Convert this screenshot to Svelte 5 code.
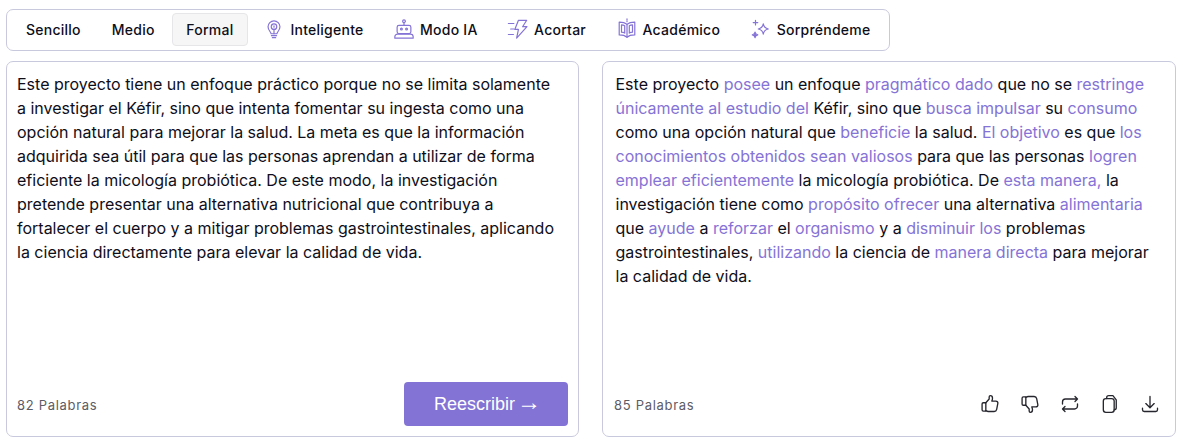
<script>
	const modes = [
		{ label: 'Sencillo' },
		{ label: 'Medio' },
		{ label: 'Formal', active: true },
		{ label: 'Inteligente', icon: 'bulb' },
		{ label: 'Modo IA', icon: 'robot' },
		{ label: 'Acortar', icon: 'bolt' },
		{ label: 'Académico', icon: 'book' },
		{ label: 'Sorpréndeme', icon: 'spark' }
	];

	const original =
		'Este proyecto tiene un enfoque práctico porque no se limita solamente a investigar el Kéfir, sino que intenta fomentar su ingesta como una opción natural para mejorar la salud. La meta es que la información adquirida sea útil para que las personas aprendan a utilizar de forma eficiente la micología probiótica. De este modo, la investigación pretende presentar una alternativa nutricional que contribuya a fortalecer el cuerpo y a mitigar problemas gastrointestinales, aplicando la ciencia directamente para elevar la calidad de vida.';

	// [text, changed]
	const rewritten = [
		['Este proyecto ', false],
		['posee', true],
		[' un enfoque ', false],
		['pragmático dado', true],
		[' que no se ', false],
		['restringe únicamente al estudio del', true],
		[' Kéfir, sino que ', false],
		['busca impulsar', true],
		[' su ', false],
		['consumo', true],
		[' como una opción natural que ', false],
		['beneficie', true],
		[' la salud. ', false],
		['El objetivo', true],
		[' es que ', false],
		['los conocimientos obtenidos sean valiosos', true],
		[' para que las personas ', false],
		['logren emplear eficientemente', true],
		[' la micología probiótica. De ', false],
		['esta manera,', true],
		[' la investigación tiene como ', false],
		['propósito ofrecer', true],
		[' una alternativa ', false],
		['alimentaria', true],
		[' que ', false],
		['ayude', true],
		[' a ', false],
		['reforzar', true],
		[' el ', false],
		['organismo', true],
		[' y a ', false],
		['disminuir los', true],
		[' problemas gastrointestinales, ', false],
		['utilizando', true],
		[' la ciencia de ', false],
		['manera directa', true],
		[' para mejorar la calidad de vida.', false]
	];
</script>

<div class="page">
	<div class="toolbar">
		{#each modes as mode}
			<button class="mode" class:active={mode.active}>
				{#if mode.icon === 'bulb'}
					<svg width="22" height="22" viewBox="0 0 24 24" class="ic">
						<path d="M8.800 17.200c0-2-3.300-3.600-3.300-7.600a6.500 6.500 0 0 1 13 0c0 4-3.300 5.600-3.300 7.600z" />
						<circle cx="12" cy="9.500" r="3" />
						<path d="M12 8.500v1.500M12 12.500v4.700M9.200 19.300h5.600M10.200 21.500h3.600" />
					</svg>
				{:else if mode.icon === 'robot'}
					<svg width="22" height="22" viewBox="0 0 24 24" class="ic">
						<circle cx="12" cy="3.500" r="1.500" />
						<path d="M12 5v3" />
						<rect x="4.500" y="8" width="15" height="9" rx="2" />
						<circle cx="9.200" cy="12" r="1" />
						<circle cx="14.800" cy="12" r="1" />
						<path d="M2 22v-1.500a3 3 0 0 1 3-3h14a3 3 0 0 1 3 3V22M2 22h20" />
					</svg>
				{:else if mode.icon === 'bolt'}
					<svg width="22" height="22" viewBox="0 0 24 24" class="ic">
						<path d="M12.500 2.500h9l-4.500 7h4.800L10.500 22l2-9.500H8.500z" />
						<path d="M1.500 6h6M4 12h3.500M1.500 18h5.500" />
					</svg>
				{:else if mode.icon === 'book'}
					<svg width="22" height="22" viewBox="0 0 24 24" class="ic">
						<path d="M12 7c-2-1.800-5-2.500-8.500-2.500v14c3.500 0 6.500.7 8.500 2.500 2-1.800 5-2.500 8.500-2.500v-14C17 4.500 14 5.200 12 7z" />
						<path d="M12 7v14M6 7.500c1.500 0 2.500.3 3.500 1v8c-1-.7-2-1-3.500-1zM18 7.500c-1.500 0-2.500.3-3.500 1v8c1-.7 2-1 3.500-1z" />
						<path d="M12 1v1.200M12 3.400v.6" />
					</svg>
				{:else if mode.icon === 'spark'}
					<svg width="22" height="22" viewBox="0 0 24 24" class="ic">
						<path d="M14.500 6.500c.6 3.300 2.200 4.900 5.500 5.500-3.300.6-4.900 2.200-5.500 5.500-.6-3.300-2.200-4.900-5.500-5.500 3.300-.6 4.900-2.200 5.500-5.500z" />
						<path d="M6 2.500v5M3.500 5h5" />
						<path d="M5.500 15.500c.3 1.900 1.100 2.700 3 3-1.900.3-2.700 1.100-3 3-.3-1.900-1.100-2.700-3-3 1.900-.3 2.700-1.100 3-3z" class="fill" />
					</svg>
				{/if}
				<span>{mode.label}</span>
			</button>
		{/each}
	</div>

	<div class="panels">
		<div class="panel">
			<p class="text source">{original}</p>
			<div class="foot">
				<span class="count">82 Palabras</span>
				<button class="submit">Reescribir <span class="arrow">→</span></button>
			</div>
		</div>

		<div class="panel result">
			<p class="text">
				{#each rewritten as [part, changed]}{#if changed}<span class="changed">{part}</span>{:else}{part}{/if}{/each}
			</p>
			<div class="foot">
				<span class="count">85 Palabras</span>
				<div class="actions">
					<svg width="20" height="20" viewBox="0 0 24 24" class="act">
						<path d="M7 10.500H4A1.500 1.500 0 0 0 2.500 12v7A1.500 1.500 0 0 0 4 20.500h3z" />
						<path d="M7 10.500l4-4.500V3.500c0-1 .7-1.500 1.500-1.500 1.800 0 2.500 1.500 2.500 3 0 1.500-.8 3.500-.8 3.500H19c1.600 0 2.700 1.300 2.400 2.800L20 18.500c-.3 1.500-1.400 2.500-3 2.500h-7c-1.200 0-2-.4-3-1" />
					</svg>
					<svg width="20" height="20" viewBox="0 0 24 24" class="act">
						<path d="M7 13.500H4A1.500 1.500 0 0 1 2.500 12V5A1.500 1.500 0 0 1 4 3.500h3z" />
						<path d="M7 13.500l4 4.500v2.500c0 1 .7 1.500 1.500 1.500 1.800 0 2.500-1.500 2.500-3 0-1.500-.8-3.500-.8-3.500H19c1.600 0 2.700-1.300 2.400-2.800L20 5.500C19.700 4 18.600 3 17 3h-7c-1.200 0-2 .4-3 1" />
					</svg>
					<svg width="20" height="20" viewBox="0 0 24 24" class="act">
						<path d="M3 12V9.500A3.500 3.500 0 0 1 6.500 6H21M18 3l3 3-3 3" />
						<path d="M21 12v2.500a3.500 3.500 0 0 1-3.500 3.500H3M6 15l-3 3 3 3" />
					</svg>
					<svg width="20" height="20" viewBox="0 0 24 24" class="act">
						<path d="M8 5.500v-1A2.500 2.500 0 0 1 10.500 2h5l4 5v9.500A2.500 2.500 0 0 1 17 19" />
						<rect x="4" y="5.500" width="13" height="16.500" rx="3" />
					</svg>
					<svg width="20" height="20" viewBox="0 0 24 24" class="act">
						<path d="M12 3v13M7 11.500l5 5 5-5M3 17v2a2 2 0 0 0 2 2h14a2 2 0 0 0 2-2v-2" />
					</svg>
				</div>
			</div>
		</div>
	</div>
</div>

<style>
	:global(body) {
		background: #fff;
		font-family: Inter, 'Liberation Sans', sans-serif;
	}

	.page {
		padding: 9px 7px 0 6px;
	}

	.toolbar {
		display: flex;
		align-items: center;
		gap: 3px;
		width: 884px;
		height: 42px;
		box-sizing: border-box;
		border: 1px solid #c9c9dd;
		border-radius: 7px;
		padding: 0 5px 2px;
	}

	.mode {
		display: flex;
		align-items: center;
		gap: 5px;
		height: 33px;
		padding: 0 13px;
		border: 1px solid transparent;
		border-radius: 4px;
		background: none;
		font: 500 14px Inter, sans-serif;
		letter-spacing: 0.25px;
		white-space: nowrap;
		color: #0e0e1a;
	}

	.mode.active {
		padding: 0 13.500px;
		background: #f6f6f6;
		border-color: #e6e6e9;
	}

	.ic {
		margin-left: -1.500px;
		fill: none;
		stroke: #8573d6;
		stroke-width: 1.300;
		stroke-linecap: round;
		stroke-linejoin: round;
	}

	.ic .fill {
		fill: #8573d6;
	}

	.panels {
		display: flex;
		justify-content: space-between;
		margin-top: 10px;
	}

	.panel {
		display: flex;
		flex-direction: column;
		justify-content: space-between;
		width: 573px;
		height: 376px;
		box-sizing: border-box;
		border: 1px solid #c9c9dd;
		border-radius: 7px;
		padding: 10px;
	}

	.panel.result {
		width: 574px;
		padding-left: 12.500px;
		padding-right: 15px;
	}

	.text {
		margin: 0;
		font-size: 16px;
		line-height: 24px;
		color: #0e0e1a;
	}

	.text.source {
		padding-right: 10px;
	}

	.result .text {
		margin-right: -1px;
	}

	.changed {
		color: #8573d6;
	}

	.foot {
		display: flex;
		align-items: center;
		justify-content: space-between;
		height: 44px;
	}

	.result .foot {
		margin-left: -1.500px;
	}

	.count {
		font-size: 13px;
		color: #5c5c66;
		letter-spacing: 0.7px;
		margin-top: 2px;
	}

	.submit {
		width: 164px;
		height: 44px;
		border: none;
		border-radius: 4px;
		background: #8373d4;
		color: #fff;
		font: 400 18px 'Liberation Sans', Arial, sans-serif;
	}

	.arrow {
		font-size: 24px;
		line-height: 18px;
		margin: 0 -3px 0 -3px;
		vertical-align: 0;
	}

	.actions {
		display: flex;
		gap: 20px;
	}

	.act {
		fill: none;
		stroke: #26262e;
		stroke-width: 1.600;
		stroke-linecap: round;
		stroke-linejoin: round;
	}
</style>
